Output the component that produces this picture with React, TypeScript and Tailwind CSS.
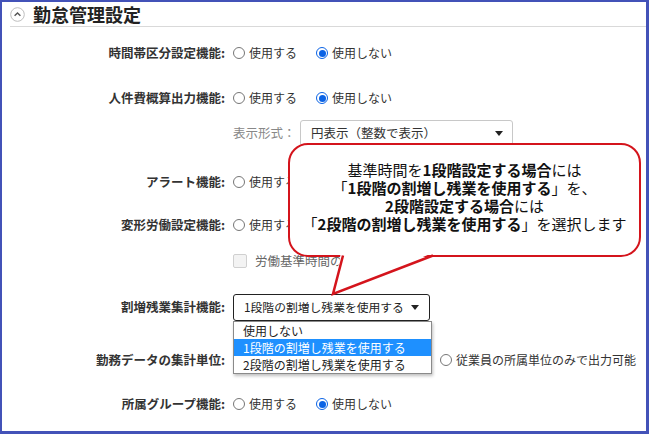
const jp = "font-['Noto_Sans_CJK_JP','Liberation_Sans',sans-serif]";

function Radio({ checked }: { checked?: boolean }) {
  if (checked) {
    return (
      <span className="w-[12px] h-[12px] rounded-full border border-[#0b63e5] bg-white flex items-center justify-center shrink-0">
        <span className="w-[7px] h-[7px] rounded-full bg-[#0b63e5]" />
      </span>
    )
  }
  return <span className="w-[12px] h-[12px] rounded-full border border-[#767676] bg-white shrink-0" />
}

function Option({ label, checked }: { label: string; checked?: boolean }) {
  return (
    <span className="flex items-center gap-[4px] text-[12px] text-[#333] whitespace-nowrap">
      <Radio checked={checked} />
      {label}
    </span>
  )
}

function Caret() {
  return (
    <svg width="8" height="5" viewBox="0 0 8 5" className="shrink-0">
      <path d="M0 0 L8 0 L4 5 Z" fill="#222" />
    </svg>
  )
}

function Row({ h, label, children }: { h: string; label?: string; children?: React.ReactNode }) {
  return (
    <div className={`flex items-center ${h}`}>
      <div className="w-[223px] shrink-0 text-right font-bold text-[12.5px] text-[#333] whitespace-nowrap">{label}</div>
      <div className="ml-[8px] flex items-center">{children}</div>
    </div>
  )
}

function UseToggle({ covered }: { covered?: boolean }) {
  return (
    <>
      <Option label="使用する" />
      {/* the second option sits under the callout in these rows */}
      {!covered && (
        <span className="ml-[19px]">
          <Option label="使用しない" checked />
        </span>
      )}
    </>
  )
}

export default function App() {
  return (
    <div className={`relative w-[649px] h-[434px] bg-white overflow-hidden border-l-2 border-t-2 border-r-[3px] border-b-[3px] border-[#4352b8] ${jp}`}>
      {/* header */}
      <div className="h-[24px] flex items-center pl-[8px] gap-[8px]">
        <svg width="15" height="15" viewBox="0 0 15 15">
          <circle cx="7.5" cy="7.5" r="6.8" fill="#fff" stroke="#bdbdbd" strokeWidth="1" />
          <path d="M4.6 8.8 L7.5 5.9 L10.4 8.8" fill="none" stroke="#555" strokeWidth="1.4" />
        </svg>
        <span className="text-[18px] font-bold text-[#222] leading-none">勤怠管理設定</span>
      </div>
      <div className="ml-[8px] h-px bg-[#d9d9d9]" />

      <Row h="h-[52px]" label="時間帯区分設定機能:">
        <UseToggle />
      </Row>
      <Row h="h-[38px]" label="人件費概算出力機能:">
        <UseToggle />
      </Row>
      <Row h="h-[32px]">
        <span className="w-[60px] text-[12.5px] text-[#888] whitespace-nowrap">表示形式：</span>
        <div className="ml-[7px] w-[213px] h-[26px] border border-[#c8c8c8] rounded-[3px] pl-[10px] pr-[9px] flex items-center justify-between">
          <span className="text-[12.5px] text-[#333]">円表示（整数で表示）</span>
          <Caret />
        </div>
      </Row>
      <Row h="h-[66px]" label="アラート機能:">
        <UseToggle covered />
      </Row>
      <Row h="h-[20px]" label="変形労働設定機能:">
        <UseToggle covered />
      </Row>
      <Row h="h-[52px]">
        <span className="w-[14px] h-[14px] rounded-[2px] border border-[#d0d0d0] bg-[#f3f3f3]" />
        <span className="ml-[8px] text-[12.5px] text-[#666] whitespace-nowrap">労働基準時間の設定</span>
      </Row>
      <Row h="h-[40px]" label="割増残業集計機能:">
        <div className="w-[197px] h-[27px] border-[1.5px] border-[#222] rounded-[3px] pl-[10px] pr-[10px] flex items-center justify-between">
          <span className="text-[11.8px] text-[#222]">1段階の割増し残業を使用する</span>
          <Caret />
        </div>
      </Row>
      <Row h="h-[66px]" label="勤務データの集計単位:">
        <span className="w-[207px]" />
        <Option label="従業員の所属単位のみで出力可能" />
      </Row>
      <Row h="h-[22px]" label="所属グループ機能:">
        <UseToggle />
      </Row>

      {/* open dropdown list */}
      <div className="absolute left-[231px] top-[319px] w-[199px] bg-white border border-[#8a8a8a] shadow-[1px_2px_3px_rgba(0,0,0,0.25)] text-[12px] text-[#222] z-10">
        <div className="h-[17px] leading-[17px] pl-[9px]">使用しない</div>
        <div className="h-[17px] leading-[17px] pl-[9px] bg-[#1e90ff] text-white">1段階の割増し残業を使用する</div>
        <div className="h-[17px] leading-[17px] pl-[9px]">2段階の割増し残業を使用する</div>
      </div>

      {/* callout */}
      <div className="absolute left-[286px] top-[141px] w-[353px] h-[114px] bg-white border-[2.5px] border-[#d4141c] rounded-[20px] flex items-center justify-center pb-[6px] z-20">
        <p className="text-[15px] leading-[18px] text-[#111] text-center whitespace-nowrap">
          基準時間を<b className="font-bold">1段階設定する場合</b>には
          <br />
          「<b className="font-bold">1段階の割増し残業を使用する</b>」を、
          <br />
          <b className="font-bold">2段階設定する場合</b>には
          <br />
          「<b className="font-bold">2段階の割増し残業を使用する</b>」を選択します
        </p>
      </div>
      <svg className="absolute left-[318px] top-[248px] z-30" width="130" height="50" viewBox="0 0 130 50">
        <polygon points="21,2 115,2 13,44" fill="#fff" />
        <polyline points="23,5.5 13,44 113,5.5" fill="none" stroke="#d4141c" strokeWidth="2.5" strokeLinejoin="miter" />
      </svg>
    </div>
  )
}
